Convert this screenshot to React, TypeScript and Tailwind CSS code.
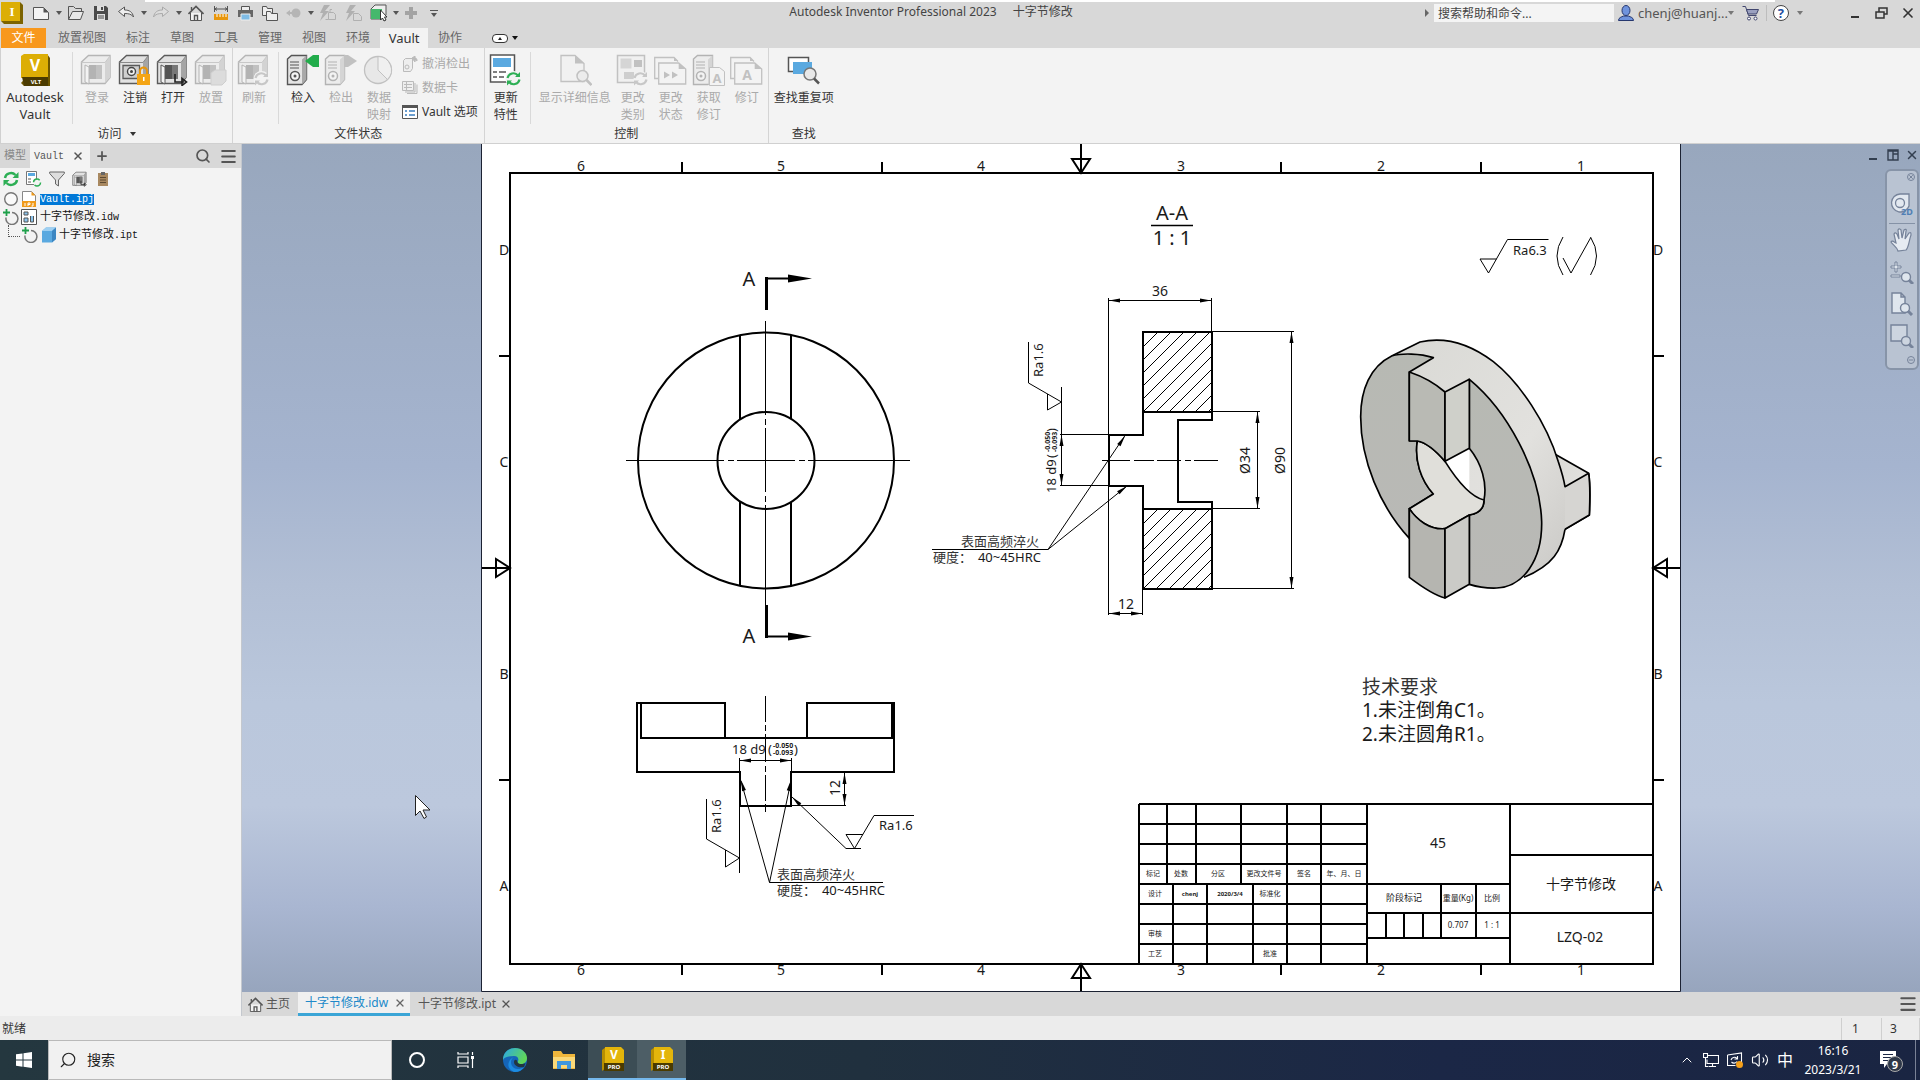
import type { ReactNode } from 'react'
import { ChevronUp, Menu, Minus, Plus, Search, Volume2, X } from 'lucide-react'
import clsx from 'clsx'

const UI_FONT = "font-['Noto_Sans','Noto_Sans_CJK_SC',sans-serif]"
const MONO_FONT = "font-['Liberation_Mono','Noto_Sans_CJK_SC',monospace]"

type IconProps = { className?: string }

function Caret({ className = 'border-t-[#555]' }: IconProps) {
  return (
    <span
      className={clsx(
        'block h-0 w-0 border-x-[3px] border-t-4 border-x-transparent',
        className
      )}
    />
  )
}

/* ---------- quick access icons ---------- */

const quickIcons: { label: string; width: string; icon: ReactNode }[] = [
  {
    label: '新建',
    width: 'w-[18px]',
    icon: (
      <svg viewBox="0 0 18 18" className="h-[18px] w-[18px]">
        <path d="M1.500 3.500h10l5 5v7h-15z" fill="#f4f4f4" stroke="#555" />
        <path d="M11.500 3.500v5h5z" fill="#555" />
      </svg>
    )
  },
  {
    label: '打开',
    width: 'w-[18px]',
    icon: (
      <svg viewBox="0 0 18 18" className="h-[18px] w-[18px]">
        <path d="M1.500 15.500v-13h5l2 2h6v3" fill="none" stroke="#555" />
        <path d="M1.500 15.500l4-8h11l-3 8z" fill="#e8e8e8" stroke="#555" />
      </svg>
    )
  },
  {
    label: '保存',
    width: 'w-4',
    icon: (
      <svg viewBox="0 0 16 16" className="h-4 w-4">
        <path d="M1 1h12l2 2v12H1z" fill="#4a4a4a" />
        <path d="M4 1h7v5H4zM4 9h8v6H4z" fill="#e0e0e0" />
        <path d="M8 2h2v3H8zM5 10.500h6v1H5zM5 12.500h6v1H5z" fill="#4a4a4a" />
      </svg>
    )
  },
  {
    label: '撤消',
    width: 'w-[18px]',
    icon: (
      <svg viewBox="0 0 18 18" className="h-[18px] w-[18px]">
        <path
          d="M1.500 7.500l6-4.500v3c5 0 8 2 9 7-2-3-5-3.500-9-3.500v3z"
          fill="#eee"
          stroke="#555"
        />
      </svg>
    )
  },
  {
    label: '重做',
    width: 'w-[18px]',
    icon: (
      <svg viewBox="0 0 18 18" className="h-[18px] w-[18px]">
        <path
          d="M16.500 7.500l-6-4.500v3c-5 0-8 2-9 7 2-3 5-3.500 9-3.500v3z"
          fill="#ddd"
          stroke="#aaa"
        />
      </svg>
    )
  },
  { label: '主页', width: 'w-[18px]', icon: <HomeIcon /> },
  {
    label: '测量',
    width: 'w-4',
    icon: (
      <svg viewBox="0 0 16 16" className="h-4 w-4">
        <path d="M1.500 1v6M14.500 1v6M2 4h12M4 2.500L2 4l2 1.500M12 2.500L14 4l-2 1.500" fill="none" stroke="#555" />
        <path d="M1 9h14v6H1z" fill="#e8960c" />
        <path d="M4 9v3M7 9v3M10 9v3M13 9v3" stroke="#fff" />
      </svg>
    )
  },
  {
    label: '打印',
    width: 'w-[17px]',
    icon: (
      <svg viewBox="0 0 17 17" className="h-[17px] w-[17px]">
        <path d="M4.500 1.500h8v4h-8z" fill="#eee" stroke="#555" />
        <path d="M1 5h15v7H1z" fill="#666" />
        <path d="M4 9h9v6H4z" fill="#7fbce6" stroke="#eee" />
      </svg>
    )
  },
  {
    label: '项目',
    width: 'w-4',
    icon: (
      <svg viewBox="0 0 16 16" className="h-4 w-4" fill="#eee" stroke="#555">
        <path d="M.5 1.500h4l1 2h5v7h-10z" />
        <path d="M4.500 6.500h4l1 2h6v7h-11z" />
      </svg>
    )
  },
  {
    label: '选择',
    width: 'w-4',
    icon: (
      <svg viewBox="0 0 16 16" className="h-4 w-4" fill="#b5b5b5">
        <circle cx="10" cy="8" r="4.500" />
        <path d="M0 8l4-3v2h3v2H4v2z" />
      </svg>
    )
  },
  {
    label: '更新',
    width: 'w-[18px]',
    icon: (
      <svg viewBox="0 0 18 18" className="h-[18px] w-[18px]" fill="none" stroke="#b0b0b0">
        <path d="M5 1h6L6 7h4L1 17l3-8H1z" fill="#b0b0b0" stroke="none" />
        <path d="M9.500 8.500h5l2 2v5h-7zM13 5.500h-2v3M6.500 15.500h3" />
      </svg>
    )
  },
  {
    label: '全部更新',
    width: 'w-[18px]',
    icon: (
      <svg viewBox="0 0 18 18" className="h-[18px] w-[18px]" fill="none" stroke="#b0b0b0">
        <path d="M5 1h6L6 7h4L1 17l3-8H1z" fill="#b0b0b0" stroke="none" />
        <path d="M8.500 9.500h5l3 3v4h-8z" />
      </svg>
    )
  },
  {
    label: '外观',
    width: 'w-4',
    icon: (
      <svg viewBox="0 0 18 18" className="h-[18px] w-[18px] shrink-0">
        <path d="M1 5l4-4h11v10l-4 4H1z" fill="#eee" stroke="#555" />
        <path d="M1 5h11v10H1z" fill="#45b86c" />
        <path d="M10.500 6v10l2-2 1.500 3 2-1-1.500-3H17z" fill="#fff" stroke="#333" />
      </svg>
    )
  },
  {
    label: '添加',
    width: 'w-3.5',
    icon: (
      <svg viewBox="0 0 12 12" className="h-3 w-3">
        <path d="M4 0h4v4h4v4H8v4H4V8H0V4h4z" fill="#a3a3a3" />
      </svg>
    )
  }
]

const carets = [0, 3, 4, 9, 12]

function HomeIcon({ className = 'h-4 w-4' }: IconProps) {
  return (
    <svg viewBox="0 0 16 16" className={className}>
      <path d="M2.500 8v7.500h11V8" fill="#f2f2f2" stroke="#555" />
      <path d="M.5 9L8 1.500 15.500 9" fill="none" stroke="#555" strokeWidth="1.600" />
      <path d="M6.500 15.500v-5h3v5M3.500 2v3" fill="none" stroke="#555" strokeWidth="1.400" />
    </svg>
  )
}

function InventorTile() {
  return (
    <svg viewBox="0 0 24 22" className="h-[22px] w-6">
      <path d="M20 0l3 3v19H4l-3-3z" fill="#7c6300" />
      <path d="M1 0h19v19H1z" fill="#dcae05" />
      <text x="12" y="14" textAnchor="middle" fontSize="13" fontWeight="700" fontFamily="Liberation Serif" fill="#fff">
        I
      </text>
    </svg>
  )
}

function TitleBar() {
  return (
    <header className="flex h-[26px] items-center bg-[#d8d8d8]">
      <div className="-mt-1 flex items-center">
        <InventorTile />
        <div className="ml-2 flex items-center">
          {quickIcons.map((item, i) => (
            <div key={item.label} className="flex items-center">
              <button type="button" aria-label={item.label} className={clsx('flex justify-center', item.width)}>
                {item.icon}
              </button>
              {carets.includes(i) ? (
                <span className="flex w-[17px] justify-center">
                  <Caret />
                </span>
              ) : (
                <span className="w-2" />
              )}
            </div>
          ))}
          <button type="button" aria-label="自定义" className="flex flex-col items-center gap-0.5 pl-1">
            <span className="h-px w-2 bg-[#555]" />
            <Caret />
          </button>
        </div>
      </div>
      <h1 className="-mt-1.5 flex flex-1 justify-center gap-4 text-xs text-[#444]">
        <span>Autodesk Inventor Professional 2023</span>
        <span>十字节修改</span>
      </h1>
      <div className="-mt-1 flex w-[496px] items-center">
        <span className="mr-1 ml-px h-0 w-0 border-y-4 border-l-4 border-y-transparent border-l-[#666]" />
        <input
          aria-label="搜索帮助和命令"
          placeholder="搜索帮助和命令..."
          className="ml-px h-[18px] w-[180px] bg-[#f4f4f4] px-1 text-xs outline-none placeholder:text-[#444]"
        />
        <svg viewBox="0 0 16 16" className="ml-1 h-4 w-4" fill="#6f93dd" stroke="#26376e">
          <path d="M.5 15.500c0-3 3-3.500 5-4.500h5c2 1 5 1.500 5 4.500z" />
          <ellipse cx="8" cy="5.500" rx="4" ry="5" />
        </svg>
        <button type="button" className="ml-1 flex items-center text-[13px] leading-4 whitespace-nowrap text-[#555]">
          chenj@huanj...
          <Caret className="border-t-[#777]" />
        </button>
        <svg viewBox="0 0 18 16" className="ml-2 h-4 w-[18px]" fill="#9aa0c0" stroke="#41466e">
          <path d="M.5 1.500h3l3 9h8" fill="none" />
          <path d="M4.500 4.500h12l-2 4.500H6z" />
          <circle cx="7" cy="13.500" r="1.500" fill="#fff" />
          <circle cx="13.500" cy="13.500" r="1.500" fill="#fff" />
        </svg>
        <span className="mx-1.5 h-4 w-px bg-[#bdbdbd]" />
        <button
          type="button"
          aria-label="帮助"
          className="flex h-4 w-4 items-center justify-center rounded-full border border-[#444] bg-white text-[13px] leading-none font-bold text-[#1f4fa0]"
        >
          ?
        </button>
        <Caret className="ml-2 border-t-[#777]" />
        <div className="ml-auto flex items-center gap-3 pr-1 text-[#333]">
          <button type="button" aria-label="最小化" className="mt-2 mr-1">
            <span className="block h-0.5 w-2 bg-[#333]" />
          </button>
          <button type="button" aria-label="还原">
            <svg viewBox="0 0 13 12" className="h-3 w-[13px]" fill="none" stroke="#333" strokeWidth="1.500">
              <path d="M1 5h8v6H1zM4 5V1h8v6H9" />
            </svg>
          </button>
          <button type="button" aria-label="关闭">
            <X className="h-4 w-4" strokeWidth={2.500} />
          </button>
        </div>
      </div>
    </header>
  )
}

/* ---------- ribbon ---------- */

const ribbonTabs = ['放置视图', '标注', '草图', '工具', '管理', '视图', '环境', 'Vault', '协作']

function RibbonTabs() {
  return (
    <nav className="flex h-5 items-stretch bg-[#d8d8d8] pl-px text-xs leading-5 text-[#666]">
      <button type="button" className="w-[45px] bg-[#f8981d] text-white">
        文件
      </button>
      <div role="tablist" className="ml-0.5 flex">
        {ribbonTabs.map(tab => (
          <button
            key={tab}
            type="button"
            role="tab"
            aria-selected={tab === 'Vault'}
            className={clsx(
              tab === 'Vault' ? 'w-12 bg-[#f3f3f3] text-[13px] text-[#333]' : 'px-2.5'
            )}
          >
            {tab}
          </button>
        ))}
      </div>
      <button type="button" aria-label="最小化功能区" className="ml-5 flex items-center gap-1">
        <span className="flex h-[9px] w-4 items-center justify-center rounded-sm border border-[#333] bg-white">
          <span className="h-0 w-0 border-x-2 border-b-[3px] border-x-transparent border-b-[#222]" />
        </span>
        <Caret className="border-t-[#111]" />
      </button>
    </nav>
  )
}

function Safe({ children, closed = false }: { children?: ReactNode; closed?: boolean }) {
  return (
    <>
      <path d="M1.500 8l7-6.500h21.500v22l-5 6H1.500z" fill="#e2e2e2" stroke="#5b5b5b" strokeWidth="1.400" />
      <path d="M25 8.500V29l5-5.500V2z" fill="#a5a5a5" />
      <path d="M1.500 8.500h23.500l5-6.500" fill="none" stroke="#8a8a8a" />
      {closed ? (
        <>
          <path d="M5 11.500h16.500v13H5z" fill="#cfcfcf" stroke="#5b5b5b" strokeWidth="1.300" />
          <circle cx="13.500" cy="17.500" r="4" fill="#eee" stroke="#444" strokeWidth="1.400" />
          <circle cx="13.500" cy="17.500" r="1.500" fill="#444" />
        </>
      ) : (
        <>
          <path d="M9 11h13v14H9z" fill="#555" />
          <path d="M16 11h6v14h-6z" fill="#777" />
          <path d="M5 11l4 2v17l-4-2z" fill="#f4f4f4" stroke="#5b5b5b" />
        </>
      )}
      {children}
    </>
  )
}

function Cabinet({ children }: { children?: ReactNode }) {
  return (
    <>
      <path d="M1.500 5l4-3.500h15v24L16 30.500H1.500z" fill="#e4e4e4" stroke="#555" strokeWidth="1.400" />
      <path d="M16 5.500v25l4.500-5v-24z" fill="#a9a9a9" />
      <path d="M4 8h9M4 11h9M4 14h9" stroke="#555" strokeWidth="1.200" />
      <circle cx="9" cy="22" r="4.500" fill="#f4f4f4" stroke="#555" strokeWidth="1.500" />
      <circle cx="9" cy="22" r="1.500" fill="#555" />
      {children}
    </>
  )
}

function Cycle({ color }: { color: string }) {
  return (
    <g fill="none" stroke={color} strokeWidth="2.200">
      <path d="M18.500 24a6 6 0 0 1 10.500-2.500M30.500 25.500a6 6 0 0 1-10.500 2.500" />
      <path d="M31 18v5h-5zM18 31.500v-5h5z" fill={color} stroke="none" />
    </g>
  )
}

function Sheets({ children }: { children: ReactNode }) {
  return (
    <>
      <path d="M4 24.500H.7v-21H20l4 4" fill="none" stroke="#777" strokeWidth="1.300" />
      <path d="M4.700 9h20l7 6v15h-27z" fill="#f3f3f3" stroke="#777" strokeWidth="1.300" />
      <path d="M24.700 9v6h7zM20 3.500V7h4z" fill="#777" />
      {children}
    </>
  )
}

const ribbonIcons: Record<string, ReactNode> = {
  login: <Safe />,
  logout: (
    <Safe closed>
      <path d="M22 20v-3a3.500 3.500 0 0 1 7 0v3" fill="none" stroke="#e8960c" strokeWidth="2" />
      <path d="M19 20h13v11H19z" fill="#f4a515" />
      <path d="M25 23h1.500v4H25z" fill="#fff" />
    </Safe>
  ),
  open: (
    <Safe>
      <path d="M19 20v8h9M26 24.500l4.500 3.500-4.500 3.500z" fill="none" stroke="#222" strokeWidth="1.600" />
    </Safe>
  ),
  place: (
    <Safe>
      <path d="M17 19l4-3h11v11l-4 4H17z" fill="#bbb" stroke="#999" />
    </Safe>
  ),
  refresh: (
    <Safe>
      <circle cx="24.500" cy="25" r="8" fill="#f3f3f3" />
      <Cycle color="#888" />
    </Safe>
  ),
  checkin: (
    <Cabinet>
      <path d="M19 7l8-6h6v12h-6z" fill="#22ac4b" />
    </Cabinet>
  ),
  checkout: (
    <Cabinet>
      <path d="M33 7l-9-6h-4v12h4z" fill="#777" />
    </Cabinet>
  ),
  mapping: (
    <>
      <circle cx="16" cy="16" r="13.500" fill="#d8d8d8" stroke="#777" strokeWidth="1.300" />
      <path d="M16 2.500V16l9.500 9.500A13.500 13.500 0 0 0 16 2.500z" fill="#ececec" stroke="#777" />
    </>
  ),
  props: (
    <>
      <path d="M1.500 1h24v27h-24z" fill="#fff" stroke="#555" strokeWidth="1.500" />
      <path d="M4 4h18v9H4z" fill="#5aa9e0" />
      <path d="M4 18h4M4 23h4M10 18h7M10 23h5" stroke="#555" strokeWidth="1.600" />
      <circle cx="24.500" cy="25" r="8" fill="#f3f3f3" />
      <Cycle color="#2daf55" />
    </>
  ),
  details: (
    <>
      <path d="M3 1.500h14l9 8v18H3z" fill="#f0f0f0" stroke="#777" strokeWidth="1.300" />
      <path d="M17 1.500v8h9z" fill="#777" />
      <circle cx="24.500" cy="22" r="5.500" fill="#e4e4e4" stroke="#777" strokeWidth="1.500" />
      <path d="M28.500 26l5 5" stroke="#777" strokeWidth="2.500" />
    </>
  ),
  category: (
    <>
      <path d="M1.500 1.500h27v27h-27z" fill="#eee" stroke="#777" strokeWidth="1.500" />
      <path d="M4.500 4.500h11v10h-11z" fill="#aaa" />
      <path d="M18 6h8v7h-8z" fill="#777" />
      <path d="M8 18h10v7H8z" fill="#999" />
      <circle cx="25" cy="25" r="7.500" fill="#f3f3f3" />
      <Cycle color="#888" />
    </>
  ),
  state: (
    <Sheets>
      <path d="M10 17.500l6 3.500-6 3.500zM18 17.500l6 3.500-6 3.500z" fill="#777" />
    </Sheets>
  ),
  getrev: (
    <Cabinet>
      <path d="M17.500 13.500h10l5 4v14h-15z" fill="#f3f3f3" stroke="#777" />
      <text x="25" y="29" textAnchor="middle" fontSize="13" fontWeight="700" fill="#777">
        A
      </text>
    </Cabinet>
  ),
  revise: (
    <Sheets>
      <text x="17" y="26" textAnchor="middle" fontSize="14" fontWeight="700" fill="#777">
        A
      </text>
    </Sheets>
  ),
  find: (
    <>
      <path d="M1.500 3.500h20v14h-20z" fill="#fff" stroke="#555" strokeWidth="1.500" />
      <path d="M6 8h19v12H6z" fill="#5aa9e0" />
      <circle cx="23" cy="20" r="6" fill="#e8e8e8" stroke="#777" strokeWidth="1.500" />
      <path d="M27 24.500l5 5" stroke="#555" strokeWidth="2.500" />
    </>
  )
}

type ToolProps = { icon: string; lines: string[]; width?: string; disabled?: boolean }

function Tool({ icon, lines, width = 'w-[38px]', disabled = false }: ToolProps) {
  return (
    <button
      type="button"
      disabled={disabled}
      className={clsx('flex flex-col items-center pt-1.5', width, disabled ? 'text-[#aaa]' : 'text-[#333]')}
    >
      <svg viewBox="0 0 34 32" className={clsx('h-8 w-[34px]', disabled && 'opacity-40')}>
        {ribbonIcons[icon]}
      </svg>
      <span className="mt-[3px] flex flex-col text-xs leading-[17px] whitespace-nowrap">
        {lines.map(line => (
          <span key={line}>{line}</span>
        ))}
      </span>
    </button>
  )
}

function Divider() {
  return <span className="mx-[5px] mt-1 h-[72px] w-px bg-[#d9d9d9]" />
}

function RibbonGroup({ label, children, caret = false }: { label: string; children: ReactNode; caret?: boolean }) {
  return (
    <section className="flex flex-col border-r border-[#d4d4d4]">
      <div className="flex h-[77px] px-0.5">{children}</div>
      <h2 className="flex items-center justify-center gap-2 text-xs leading-[17px] text-[#333]">
        {label}
        {caret && <Caret className="border-t-[#333]" />}
      </h2>
    </section>
  )
}

function Ribbon() {
  return (
    <div className="flex h-24 border-b border-l border-[#d0d0d0] bg-[#f3f3f3]">
      <RibbonGroup label="访问" caret>
        <button type="button" className="flex w-16 flex-col items-center pt-1.5 text-[#333]">
          <svg viewBox="0 0 32 32" className="h-8 w-8">
            <path d="M28 0l3 4v28H5l-3-3z" fill="#6d5600" />
            <path d="M2 2l3-2h24v24H2z" fill="#dcae05" />
            <path d="M3 23h26v9H5z" fill="#4b3b00" />
            <text x="16" y="17" textAnchor="middle" fontSize="16" fontWeight="700" fill="#fff">
              V
            </text>
            <text x="17" y="30" textAnchor="middle" fontSize="6" fontWeight="700" fill="#fff">
              VLT
            </text>
          </svg>
          <span className="mt-[3px] text-[13px] leading-[17px]">
            Autodesk
            <br />
            Vault
          </span>
        </button>
        <Divider />
        <Tool icon="login" lines={['登录']} disabled />
        <Tool icon="logout" lines={['注销']} />
        <Tool icon="open" lines={['打开']} />
        <Tool icon="place" lines={['放置']} disabled />
      </RibbonGroup>
      <RibbonGroup label="文件状态">
        <Tool icon="refresh" lines={['刷新']} disabled />
        <Divider />
        <Tool icon="checkin" lines={['检入']} />
        <Tool icon="checkout" lines={['检出']} disabled />
        <Tool icon="mapping" lines={['数据', '映射']} disabled />
        <div className="flex flex-col gap-1 pt-1.5 pr-1 pl-1 text-xs text-[#aaa]">
          <button type="button" disabled className="flex h-5 items-center gap-1">
            <svg viewBox="0 0 16 16" className="h-4 w-4" fill="#eee" stroke="#bbb">
              <path d="M1.500 4.500l2-2h7v10l-2 3h-7z" />
              <circle cx="5" cy="11" r="2" />
              <path d="M10 2l3-2v2c2 0 2 2 2 3-1-1-2-1-2-1v2z" fill="#bbb" />
            </svg>
            撤消检出
          </button>
          <button type="button" disabled className="flex h-5 items-center gap-1">
            <svg viewBox="0 0 16 16" className="h-4 w-4" fill="#eee" stroke="#bbb">
              <path d="M5 13.500h10v-9M3 12h10V3M.5 1.500h11v9H.5zM2 4.500h8M2 7.500h8M4.500 2v8" />
            </svg>
            数据卡
          </button>
          <button type="button" className="flex h-5 items-center gap-1 whitespace-nowrap text-[#333]">
            <svg viewBox="0 0 16 16" className="h-4 w-4">
              <path d="M.5 1.500h15v13H.5z" fill="#fff" stroke="#555" />
              <path d="M0 1h16v3H0z" fill="#555" />
              <path d="M3 7h2M3 11h2M7 7h6M7 11h6" stroke="#3b7fc0" strokeWidth="1.500" />
            </svg>
            Vault 选项
          </button>
        </div>
      </RibbonGroup>
      <RibbonGroup label="控制">
        <Tool icon="props" lines={['更新', '特性']} />
        <Divider />
        <Tool icon="details" lines={['显示详细信息']} width="w-[78px]" disabled />
        <Tool icon="category" lines={['更改', '类别']} disabled />
        <Tool icon="state" lines={['更改', '状态']} disabled />
        <Tool icon="getrev" lines={['获取', '修订']} disabled />
        <Tool icon="revise" lines={['修订']} disabled />
      </RibbonGroup>
      <section className="flex flex-col">
        <div className="flex h-[77px] px-1">
          <Tool icon="find" lines={['查找重复项']} width="w-[62px]" />
        </div>
        <h2 className="text-center text-xs leading-[17px] text-[#333]">查找</h2>
      </section>
    </div>
  )
}

/* ---------- browser panel ---------- */

function GreenRefresh({ className = 'h-4 w-4' }: IconProps) {
  return (
    <svg viewBox="0 0 16 16" className={className}>
      <g fill="none" stroke="#2daf55" strokeWidth="2.400">
        <path d="M2 7a6 5.500 0 0 1 10.500-3M14 9a6 5.500 0 0 1-10.500 3" />
      </g>
      <path d="M15.500 1v6H9.500zM.5 15V9h6z" fill="#2daf55" />
    </svg>
  )
}

function StatusCircle({ added = false }: { added?: boolean }) {
  return (
    <svg viewBox="0 0 16 16" className="h-4 w-4">
      {added ? (
        <>
          <path d="M9 3.500a6 6 0 1 1-6 5" fill="none" stroke="#777" strokeWidth="1.500" />
          <path d="M3.500 0v7M0 3.500h7" stroke="#1fa04a" strokeWidth="1.800" />
        </>
      ) : (
        <circle cx="8" cy="8" r="6.300" fill="#fafafa" stroke="#777" strokeWidth="1.400" />
      )}
    </svg>
  )
}

function BrowserPanel() {
  return (
    <aside className={clsx('flex w-[242px] shrink-0 flex-col border-r border-[#c4c8ce] bg-[#f3f3f3]', MONO_FONT)}>
      <div className="flex h-6 items-stretch bg-[#d8d8d8] text-[#555]">
        <button type="button" className="w-[30px] text-[11px] text-[#888]">
          模型
        </button>
        <div className="flex w-[60px] items-center justify-between bg-[#f3f3f3] pr-1.5 pl-1 text-[10px]">
          <span>Vault</span>
          <button type="button" aria-label="关闭面板">
            <X className="h-3 w-3" strokeWidth={3} />
          </button>
        </div>
        <button type="button" aria-label="添加面板" className="px-[5px]">
          <Plus className="h-3.5 w-3.5" strokeWidth={3} />
        </button>
        <div className="ml-auto flex items-center gap-2 pr-[3px]">
          <button type="button" aria-label="搜索">
            <Search className="h-4 w-4" strokeWidth={2.500} />
          </button>
          <button type="button" aria-label="菜单">
            <Menu className="h-[19px] w-[19px]" strokeWidth={2.500} />
          </button>
        </div>
      </div>
      <div className="flex h-[22px] items-center gap-[7px] pl-[3px]">
        <button type="button" aria-label="刷新">
          <GreenRefresh />
        </button>
        <button type="button" aria-label="更新状态">
          <svg viewBox="0 0 16 16" className="h-4 w-4">
            <path d="M.5.5h10v13H.5z" fill="#fff" stroke="#777" />
            <path d="M2 2h7v3H2z" fill="#5aa9e0" />
            <path d="M2 8h3M2 11h3" stroke="#555" />
            <circle cx="11" cy="11.500" r="3.500" fill="#f3f3f3" stroke="#2daf55" strokeWidth="1.500" strokeDasharray="8 3" />
          </svg>
        </button>
        <button type="button" aria-label="过滤器">
          <svg viewBox="0 0 16 16" className="h-4 w-4">
            <path d="M.7 1h14.600v1.500L9.500 9v6l-3-2V9L.7 2.500z" fill="#ddd" stroke="#666" />
          </svg>
        </button>
        <button type="button" aria-label="打开">
          <svg viewBox="0 0 34 32" className="h-4 w-4">
            {ribbonIcons.open}
          </svg>
        </button>
        <button type="button" aria-label="粘贴">
          <svg viewBox="0 0 16 16" className="h-4 w-4">
            <path d="M3 2h10v13H3z" fill="#a88860" />
            <path d="M6 1h4v3H6z" fill="#666" />
            <path d="M5 6.500h6M5 9h6M5 11.500h6" stroke="#5d4a32" />
          </svg>
        </button>
      </div>
      <ul className="text-[11px] leading-[18px] text-[#111]">
        <li className="flex h-[18px] items-center gap-0.5 pl-[3px]">
          <StatusCircle />
          <svg viewBox="0 0 16 16" className="h-4 w-4">
            <path d="M1.500.5h9l4 4v11h-13z" fill="#fff" stroke="#888" />
            <path d="M10.500.5v4h4zM1 10h14v6H1z" fill="#f09a1a" />
            <path d="M4 12v3M7 15v-3h2v1.500H7M12 12v3h-1.500" fill="none" stroke="#fff" />
          </svg>
          <span className="ml-px bg-[#0078d7] text-[10px] leading-[11px] text-white">Vault.ipj</span>
        </li>
        <li className="flex h-[18px] items-center gap-0.5 pl-[3px]">
          <StatusCircle added />
          <svg viewBox="0 0 16 16" className="h-4 w-4" stroke="#555">
            <path d="M.5.5h15v15H.5z" fill="#fff" />
            <path d="M3 3h4v3H3zM3 9h4v4H3zM9.500 7v6h3V7" fill="#8cc4ec" />
          </svg>
          <span className="ml-px">
            十字节修改<span className="text-[10px]">.idw</span>
          </span>
        </li>
        <li className="flex h-[18px] items-center gap-0.5 pl-2">
          <span className="mb-2 h-3 w-3 border-b border-l border-dotted border-[#555]" />
          <StatusCircle added />
          <svg viewBox="0 0 16 16" className="ml-px h-4 w-4">
            <path d="M1 4l4-3.500h10V12l-4 3.500H1z" fill="#5aa9e0" />
            <path d="M1 4l4-3.500h10L11 4z" fill="#9fd0f2" />
            <path d="M11 4v11.500l4-3.500V.5z" fill="#3d87c2" />
          </svg>
          <span>
            十字节修改<span className="text-[10px]">.ipt</span>
          </span>
        </li>
      </ul>
    </aside>
  )
}

/* ---------- drawing sheet ---------- */

type LabelProps = {
  x: number
  y: number
  size?: number
  anchor?: 'start' | 'middle' | 'end'
  turn?: boolean
  serif?: boolean
  bold?: boolean
  children: ReactNode
}

function Label({ x, y, size = 13, anchor = 'start', turn, serif, bold, children }: LabelProps) {
  return (
    <text
      x={x}
      y={y}
      fontSize={size}
      textAnchor={anchor}
      fontWeight={bold ? 700 : 400}
      fill={serif ? '#333' : '#1a1a1a'}
      stroke="none"
      fontFamily={serif ? "'Liberation Serif', 'Noto Sans CJK SC', serif" : "'Noto Sans', 'Noto Sans CJK SC', sans-serif"}
      transform={turn ? `rotate(-90 ${x} ${y})` : undefined}
    >
      {children}
    </text>
  )
}

// filled arrow head with its tip at (x, y), pointing along the angle in degrees
function Head({ x, y, angle, length = 11, half = 2 }: { x: number; y: number; angle: number; length?: number; half?: number }) {
  return (
    <path
      d={`M0 0L${-length} ${-half}L${-length} ${half}z`}
      transform={`translate(${x} ${y}) rotate(${angle})`}
      fill="#000"
      stroke="none"
    />
  )
}

function Frame() {
  const columns = [
    ['6', 581],
    ['5', 781],
    ['4', 981],
    ['3', 1181],
    ['2', 1381],
    ['1', 1581]
  ] as const
  const rows = [
    ['D', 255],
    ['C', 467],
    ['B', 679],
    ['A', 891]
  ] as const
  return (
    <g>
      <path d="M510 173H1653V964H510z" strokeWidth="2" />
      <path
        d="M682 162v11M882 162v11M1281 162v11M1481 162v11M682 964v11M882 964v11M1281 964v11M1481 964v11M499 356h11M499 780h11M1653 356h11M1653 780h11"
        strokeWidth="2"
      />
      <path
        d="M1081 144v29M1072 159h18L1081 173zM1081 991v-27M1072 978h18L1081 964zM482 568h28M496 559v18L510 568zM1680 568h-27M1667 559v18L1653 568z"
        strokeWidth="2"
      />
      {columns.map(([name, x]) => (
        <g key={name}>
          <Label x={x} y={171} size={14} anchor="middle">{name}</Label>
          <Label x={x} y={975} size={14} anchor="middle">{name}</Label>
        </g>
      ))}
      {rows.map(([name, y]) => (
        <g key={name}>
          <Label x={504} y={y} size={14} anchor="middle">{name}</Label>
          <Label x={1658} y={y} size={14} anchor="middle">{name}</Label>
        </g>
      ))}
    </g>
  )
}

function FrontView() {
  return (
    <g>
      <g strokeWidth="2">
        <circle cx="766" cy="460.500" r="128" />
        <circle cx="766" cy="460.500" r="48.500" />
        <path d="M740 335v84M791 335v84M740 502v84M791 502v84" />
        <path d="M766 278.500h30M766 636.500h30" />
      </g>
      <path d="M766.500 277v33M766.500 605v33" strokeWidth="3" />
      <path d="M626 460.500h98m4 0h6m3 0h58m4 0h6m3 0h102" />
      <path d="M765.500 321v94m0 4v6m0 3v64m0 4v6m0 3v100" />
      <Head x={812} y={278.5} angle={0} length={24} half={4} />
      <Head x={812} y={636.5} angle={0} length={24} half={4} />
      <Label x={749} y={286} size={20} anchor="middle">A</Label>
      <Label x={749} y={643} size={20} anchor="middle">A</Label>
    </g>
  )
}

function SectionView() {
  const hatch = Array.from({ length: 30 }, (_, i) => 1000 + i * 13)
  return (
    <g>
      <Label x={1172} y={220} size={20} anchor="middle">A-A</Label>
      <path d="M1151 225.500h42" strokeWidth="1.500" />
      <Label x={1172} y={245} size={20} anchor="middle">1 : 1</Label>

      <clipPath id="cut">
        <path d="M1143 332h69v80h-69zM1143 509h69v80h-69z" />
      </clipPath>
      <g clipPath="url(#cut)">
        {hatch.map(x => (
          <path key={x} d={`M${x} 412l80-80M${x} 589l80-80`} />
        ))}
      </g>
      <path
        d="M1143 332h69v88h-34v82h34v87h-69V486h-34v-51h34zM1143 412h69M1143 509h69"
        strokeWidth="2"
      />
      <path d="M1102 460.500h28m4 0h20m3 0h24m4 0h6m3 0h24" />

      <path d="M1108.500 298v317M1211.500 298v34M1108.500 300.500h103" />
      <Head x={1109} y={300.5} angle={180} />
      <Head x={1211} y={300.5} angle={0} />
      <Label x={1160} y={296} size={14} anchor="middle">36</Label>

      <path d="M1142.500 589v26M1108.500 613.500h34" />
      <Head x={1109} y={613.5} angle={180} />
      <Head x={1142} y={613.5} angle={0} />
      <Label x={1126} y={609} size={14} anchor="middle">12</Label>

      <path d="M1212 411.500h48M1212 508.500h48M1257.500 411v97" />
      <Head x={1257.5} y={412} angle={-90} />
      <Head x={1257.5} y={508} angle={90} />
      <Label x={1250} y={474} size={14} turn>Ø34</Label>

      <path d="M1212 331.500h82M1212 588.500h82M1291.500 332v257" />
      <Head x={1291.5} y={332} angle={-90} />
      <Head x={1291.5} y={588} angle={90} />
      <Label x={1285} y={474} size={14} turn>Ø90</Label>

      <path d="M1061.500 387v98M1060 434.500h49M1060 485.500h49" />
      <Head x={1061.5} y={435} angle={-90} />
      <Head x={1061.5} y={485} angle={90} />
      <Label x={1056} y={493} turn>18 d9</Label>
      <Label x={1056} y={458} turn>(</Label>
      <Label x={1050} y={452} size={7} turn bold>-0.050</Label>
      <Label x={1057} y={452} size={7} turn bold>-0.093</Label>
      <Label x={1056} y={432} turn>)</Label>

      <path d="M1028.500 342v41l33 19M1047.500 394v16l14-8" />
      <Label x={1043} y={377} turn>Ra1.6</Label>

      <path d="M932 549.500h116l77-114M1048 549.500l79-63.500" />
      <Head x={1125} y={436} angle={-56} />
      <Head x={1127} y={486} angle={-38} />
      <Label x={1039} y={546} anchor="end" serif>表面高频淬火</Label>
      <Label x={933} y={562} serif>硬度：</Label>
      <Label x={1041} y={562} anchor="end">40~45HRC</Label>
    </g>
  )
}

function BottomView() {
  return (
    <g>
      <g strokeWidth="2">
        <path d="M637 703h88v35h82v-35h87v69H637zM641 703v35h251v-35" />
        <path d="M740 772v34h51v-34" />
        <path d="M741 772h49" stroke="#fff" />
      </g>
      <path d="M765.500 696v26m0 3v6m0 3v28m0 4v6m0 3v26m0 3v8" />
      <Label x={732} y={754}>18 d9</Label>
      <Label x={768} y={754}>(</Label>
      <Label x={773} y={748} size={7} bold>-0.050</Label>
      <Label x={773} y={755} size={7} bold>-0.093</Label>
      <Label x={794} y={754}>)</Label>
      <path d="M739.500 758v115M791.500 758v14M740 760.500h51" />
      <Head x={740} y={760.5} angle={180} />
      <Head x={791} y={760.5} angle={0} />

      <path d="M791 805.500h55M844.500 772v34" />
      <Head x={844.5} y={773} angle={-90} />
      <Head x={844.5} y={805} angle={90} />
      <Label x={840} y={796} size={14} turn>12</Label>

      <path d="M706.500 799v40l33 19M725.500 850v17l14-9" />
      <Label x={721} y={833} turn>Ra1.6</Label>

      <path d="M883 882.500H769.500L741 781M769.500 882.500L791 781" />
      <Head x={741} y={780} angle={-106} />
      <Head x={791} y={780} angle={-78} />
      <Label x={777} y={879} serif>表面高频淬火</Label>
      <Label x={777} y={895} serif>硬度：</Label>
      <Label x={885} y={895} anchor="end">40~45HRC</Label>

      <path d="M792 797l54 51.500h15M846 834.500h17M846 834.500l8.500 14 19.500-33h40" />
      <Head x={792} y={797} angle={-136} />
      <Label x={879} y={830}>Ra1.6</Label>
    </g>
  )
}

function ShadedPart() {
  return (
    <svg x="1320" y="320" width="300" height="300" viewBox="0 0 900 900" strokeWidth="5" strokeLinejoin="round">
      <defs>
        <linearGradient id="rim" x1="0" y1="0" x2="1" y2="1">
          <stop offset="0" stopColor="#d9d9d5" />
          <stop offset=".6" stopColor="#e2e1de" />
          <stop offset="1" stopColor="#c9c8c5" />
        </linearGradient>
        <linearGradient id="face" x1="0" y1="0" x2="0" y2="1">
          <stop offset="0" stopColor="#b7b9b3" />
          <stop offset="1" stopColor="#b9b9b6" />
        </linearGradient>
      </defs>
      <path
        d="M708 404L806 460C812 500 810 540 808 585L735 628L690 560z"
        fill="url(#rim)"
      />
      <path
        d="M215 108L300 66C380 48 450 72 520 125C600 188 680 310 715 425C725 455 731 475 735 500L735 628C725 690 700 740 612 772L448 793V385L375 424V216L268 156L340 113z"
        fill="url(#rim)"
        stroke="none"
      />
      <path d="M735 500L806 460L808 585L735 628z" fill="#d6d5d2" stroke="none" />
      <path d="M215 108L300 66C380 48 450 72 520 125C600 188 680 310 715 425C725 455 731 475 735 500L806 460M735 628C725 690 700 735 612 772M806 460C812 500 810 540 808 585L735 628" />
      <path
        d="M215 108C245 99 300 100 340 113L268 156V362H292C283 420 302 480 340 522L268 566V655C180 560 122 420 122 290C122 210 150 140 215 108z"
        fill="url(#face)"
      />
      <path
        d="M448 178C560 270 660 450 665 605C667 720 610 800 530 804C500 805 470 800 448 793V585C478 580 492 565 492 540C502 490 485 430 448 385z"
        fill="url(#face)"
      />
      <path
        d="M292 363C320 368 350 395 375 424C410 480 450 530 492 540C492 565 478 580 448 585L375 626C330 630 290 600 268 566L340 522C302 480 283 420 292 363z"
        fill="#e0dfda"
      />
      <path d="M268 156C310 170 345 190 375 216V424C350 395 320 368 292 363H268z" fill="#b9bab4" />
      <path d="M375 216L448 178V385L375 424z" fill="#cfd0ca" />
      <path d="M268 566C290 600 330 630 375 626V834C340 825 305 800 268 772z" fill="#b5b5b0" />
      <path d="M375 626L448 585V793L375 834z" fill="#cbcbc7" />
    </svg>
  )
}

const titleCells: [string, number, number, number][] = [
  ['标记', 1153, 876, 7],
  ['处数', 1181, 876, 7],
  ['分区', 1218, 876, 7],
  ['更改文件号', 1264, 876, 7],
  ['签名', 1304, 876, 7],
  ['年、月、日', 1344, 876, 7],
  ['设计', 1155, 896, 7],
  ['chenj', 1190, 896, 6],
  ['2020/3/4', 1230, 896, 6],
  ['标准化', 1270, 896, 7],
  ['审核', 1155, 936, 7],
  ['工艺', 1155, 956, 7],
  ['批准', 1270, 956, 7],
  ['阶段标记', 1404, 901, 9],
  ['重量(Kg)', 1458, 901, 8],
  ['比例', 1492, 901, 8],
  ['0.707', 1458, 928, 8],
  ['1 : 1', 1492, 928, 8],
  ['45', 1438, 848, 14],
  ['十字节修改', 1581, 889, 14],
  ['LZQ-02', 1580, 942, 14]
]

function TitleBlock() {
  return (
    <g>
      <path
        strokeWidth="2"
        d="M1139 804h514M1139 804v160M1167 804v80M1196 804v80M1241 804v80M1287 804v160M1321 804v160M1367 804v160M1139 824h228M1139 844h228M1139 864h228M1139 884h371M1139 904h228M1139 924h228M1139 944h228M1173 884v80M1207 884v80M1253 884v80M1510 804v160M1441 884v54M1476 884v54M1367 913h286M1386 913v25M1404 913v25M1423 913v25M1367 938h143M1510 855h143"
      />
      {titleCells.map(([value, x, y, size]) => (
        <Label key={value} x={x} y={y} size={size} anchor="middle" bold={size === 6}>
          {value}
        </Label>
      ))}
    </g>
  )
}

function Sheet() {
  return (
    <svg
      viewBox="481 144 1200 848"
      className="mx-auto block h-full"
      fill="none"
      stroke="#000"
      strokeWidth="1"
      role="img"
      aria-label="十字节修改 工程图"
    >
      <path d="M481.500 143.500h1199v848h-1199z" fill="#fff" stroke="#1c2233" />
      <Frame />
      <FrontView />
      <SectionView />
      <BottomView />
      <ShadedPart />
      <path d="M1480 259h16.500M1480 259l8.500 14 19-33.500h41" />
      <Label x={1513} y={255}>Ra6.3</Label>
      <path d="M1563 237q-12 19 0 38M1563 258l8 15 19.500-35M1590.500 237q12 19 0 38" />
      <Label x={1362} y={694} size={19} serif>技术要求</Label>
      <Label x={1362} y={717} size={19}>1.未注倒角C1。</Label>
      <Label x={1362} y={741} size={19}>2.未注圆角R1。</Label>
      <TitleBlock />
    </svg>
  )
}

function NavBar() {
  const icon = 'h-6 w-6'
  return (
    <div className="absolute top-[25px] right-px flex h-[201px] w-[34px] flex-col items-center rounded-md border-2 border-[#8794a8] bg-[#b9c3d2] text-[#76839a]">
      <button type="button" aria-label="关闭导航栏" className="mt-0.5 mr-0.5 flex h-2 w-2 items-center justify-center self-end rounded-full border border-current">
        <X className="h-1.5 w-1.5" strokeWidth={4} />
      </button>
      <button type="button" aria-label="二维控制盘" className="mt-3">
        <svg viewBox="0 0 24 26" className="h-[26px] w-6" fill="#e2e8f0" stroke="currentColor" strokeWidth="1.300">
          <path d="M10 1h9v12a9 9 0 1 1-9-12z" />
          <circle cx="10" cy="10" r="4.500" />
          <text x="11" y="22" fontSize="9" fontWeight="700" fill="#4f7fb5" stroke="none">
            2D
          </text>
        </svg>
      </button>
      <span className="my-1 h-px w-[26px] bg-[#8592a6]" />
      <button type="button" aria-label="平移">
        <svg viewBox="0 0 24 24" className={icon} fill="#e6ebf2" stroke="currentColor" strokeWidth="1.200">
          <path d="M8 23c-1-4-5-6-7-9 1-2 3 0 5 1L4 6c1-2 2-1 3 0l2 5-1-9c1-2 2-1 3 0l1 8 2-8c1-1 3-1 2 1l-1 8 4-6c2-1 2 0 2 2-2 5-2 12-5 15z" />
        </svg>
      </button>
      <button type="button" aria-label="缩放" className="mt-2">
        <svg viewBox="0 0 24 24" className={icon} fill="#dfe6ee" stroke="currentColor" strokeWidth="1.400">
          <path d="M5 2h2v4h4v2H7v4H5V8H1V6h4zM1 15h9v2H1z" strokeWidth="1" />
          <circle cx="16" cy="17" r="4.500" />
          <path d="M19 20l4 4" strokeWidth="3" />
        </svg>
      </button>
      <button type="button" aria-label="全部缩放" className="mt-2">
        <svg viewBox="0 0 24 24" className={icon} fill="#dfe6ee" stroke="currentColor" strokeWidth="1.400">
          <path d="M2 1h9l4 4v16H2zM11 1v4h4" />
          <circle cx="15" cy="16" r="4.500" />
          <path d="M18 19l4 4" strokeWidth="3" />
        </svg>
      </button>
      <button type="button" aria-label="窗口缩放" className="mt-2">
        <svg viewBox="0 0 24 24" className={icon} fill="#cdd5e0" stroke="currentColor" strokeWidth="1.400">
          <path d="M1 1h16v16H1z" />
          <circle cx="16" cy="17" r="4.500" />
          <path d="M19 20l4 4" strokeWidth="3" />
        </svg>
      </button>
      <button type="button" aria-label="导航栏选项" className="mt-auto mr-0.5 mb-1 flex h-2 w-2 items-center justify-center self-end rounded-full border border-current">
        <Minus className="h-1.5 w-1.5" strokeWidth={4} />
      </button>
    </div>
  )
}

function Canvas() {
  return (
    <main className="relative min-h-0 flex-1 bg-[linear-gradient(to_bottom,#98a7bd_0%,#a5b4cf_38%,#b2bfd5_52%,#bac7dc_66%,#bcc8dd_78%,#a9b6d1_90%,#97a5bd_100%)]">
      <Sheet />
      <div className="absolute top-1 right-px flex items-center gap-2.5 text-[#333f50]">
        <button type="button" aria-label="最小化视图" className="mt-2">
          <span className="block h-0.5 w-2 bg-current" />
        </button>
        <button type="button" aria-label="平铺视图">
          <svg viewBox="0 0 12 12" className="h-3 w-3" fill="none" stroke="currentColor" strokeWidth="1.400">
            <path d="M1 1h10v10H1zM6 1v10M6 5h5M1 2h10" />
          </svg>
        </button>
        <button type="button" aria-label="关闭视图" className="-ml-1">
          <X className="h-3.5 w-3.5" strokeWidth={2.500} />
        </button>
      </div>
      <NavBar />
      <svg viewBox="0 0 16 24" className="absolute top-[651px] left-[173px] h-6 w-4">
        <path d="M.5.5v20l4.500-4.500 4 7.500 2.500-1.500-3.500-7h7z" fill="#fff" stroke="#222" />
      </svg>
    </main>
  )
}

function DocumentTabs() {
  return (
    <nav className="flex h-6 items-stretch bg-[#d8d8d8] text-xs text-[#555]">
      <button type="button" className="flex w-14 items-center gap-[3px] pl-1.5">
        <HomeIcon className="h-[15px] w-[15px]" />
        主页
      </button>
      <div className="flex w-28 items-center justify-between border-b-[3px] border-[#3ba5d6] bg-[#f0f0f0] pr-1 pl-[7px] whitespace-nowrap text-[#2089c9]">
        十字节修改.idw
        <button type="button" aria-label="关闭 idw" className="text-[#666]">
          <X className="h-3 w-3" strokeWidth={2.500} />
        </button>
      </div>
      <div className="flex w-28 items-center justify-between pr-2.5 pl-2 whitespace-nowrap">
        十字节修改.ipt
        <button type="button" aria-label="关闭 ipt">
          <X className="h-3 w-3" strokeWidth={2.500} />
        </button>
      </div>
      <button type="button" aria-label="文档列表" className="ml-auto pr-0.5">
        <Menu className="h-5 w-5" strokeWidth={2.500} />
      </button>
    </nav>
  )
}

function StatusBar() {
  return (
    <footer className="flex h-6 items-center bg-[#ececec] pt-0.5 pl-0.5 text-xs text-[#333]">
      <span>就绪</span>
      <span className="ml-auto h-[22px] w-10 border-l border-[#cfcfcf] pl-2.5 leading-[22px]">1</span>
      <span className="h-[22px] w-[39px] border-x border-[#cfcfcf] pl-2 leading-[22px]">3</span>
    </footer>
  )
}

/* ---------- taskbar ---------- */

function ProTile({ letter }: { letter: string }) {
  return (
    <svg viewBox="0 0 24 24" className="h-6 w-6">
      <path d="M1 3l4-3v21l-4 3z" fill="#b88f00" />
      <path d="M4 0h16l3 3v18H4z" fill="#e3b50b" />
      <path d="M3 16h20v8H3z" fill="#4b3b00" />
      <text x="13" y="12" textAnchor="middle" fontSize="12" fontWeight="700" fill="#fff">
        {letter}
      </text>
      <text x="13" y="22" textAnchor="middle" fontSize="6" fontWeight="700" fill="#fff">
        PRO
      </text>
    </svg>
  )
}

function Taskbar() {
  const item = 'flex w-[49px] items-center justify-center'
  return (
    <footer className="flex h-10 items-stretch bg-[linear-gradient(to_right,#24373f,#20303e_45%,#1b2746_75%,#1a2542)] text-white">
      <button type="button" aria-label="开始" className="flex w-12 items-center justify-center">
        <svg viewBox="0 0 16 16" className="h-4 w-4" fill="#fff">
          <path d="M0 2.300l6.500-.9v6.200H0zM7.500 1.200L16 0v7.600H7.500zM0 8.500h6.500v6.200L0 13.800zM7.500 8.500H16V16l-8.500-1.200z" />
        </svg>
      </button>
      <label className="flex w-[344px] items-center border border-[#b9b9b9] bg-[#f1f1f1] pl-2.5">
        <Search className="h-[18px] w-[18px] shrink-0 -scale-x-100 text-[#222]" strokeWidth={1.500} />
        <input
          aria-label="搜索"
          placeholder="搜索"
          className="ml-2.5 w-full bg-transparent text-sm outline-none placeholder:text-[#222]"
        />
      </label>
      <button type="button" aria-label="Cortana" className={item}>
        <span className="h-4 w-4 rounded-full border-2 border-white" />
      </button>
      <button type="button" aria-label="任务视图" className={item}>
        <svg viewBox="0 0 18 18" className="h-[18px] w-[18px]" fill="none" stroke="#fff" strokeWidth="1.200">
          <path d="M1 1v2h10V1M1 6h10v6H1zM1 17v-2h10v2M15.500 1v3M15.500 8v9" />
          <path d="M14 5h3v3h-3z" fill="#fff" stroke="none" />
        </svg>
      </button>
      <button type="button" aria-label="Microsoft Edge" className={item}>
        <svg viewBox="0 0 24 24" className="h-6 w-6">
          <defs>
            <linearGradient id="edge" x1="0" y1="0" x2="1" y2=".4">
              <stop offset="0" stopColor="#2aa7e8" />
              <stop offset="1" stopColor="#5fd65a" />
            </linearGradient>
          </defs>
          <circle cx="12" cy="12" r="12" fill="#1565b8" />
          <path d="M0 12C0 4 6 0 12 0c7 0 12 5 12 10 0 4-3 6-6 6-4 0-4-2-3-3 1-2 0-5-4-5-5 0-10 1-11 4z" fill="url(#edge)" />
          <path d="M11 9c-4 2-4 8 0 11 3 2 7 1 10-1-2 3-5 5-9 5-5-1-8-6-6-10 1-3 3-4 5-5z" fill="#1c8be0" />
          <path d="M14.500 14c0 2 5 3 8 1l-1.500 4c-5 1-10-1-10-5 0-3 3-3 3.500 0z" fill="#223640" />
        </svg>
      </button>
      <button type="button" aria-label="文件资源管理器" className={item}>
        <svg viewBox="0 0 22 20" className="h-5 w-[22px]">
          <path d="M0 1h8l2 3h12v15H0z" fill="#f0b73c" />
          <path d="M0 7h22v11H0z" fill="#fbd978" />
          <path d="M4 11h14v8h-4v-4H8v4H4z" fill="#3f97dd" />
        </svg>
      </button>
      <button type="button" aria-label="Vault Professional" className={clsx(item, 'border-b-2 border-[#76b9ed] bg-[#3c4d55]')}>
        <ProTile letter="V" />
      </button>
      <button type="button" aria-label="Inventor Professional" className={clsx(item, 'border-b-2 border-[#76b9ed] bg-[#4d5e66]')}>
        <ProTile letter="I" />
      </button>
      <div className="ml-auto flex items-center">
        <div className="flex items-center gap-2">
          <ChevronUp className="h-4 w-4" strokeWidth={1.500} />
          <svg viewBox="0 0 16 14" className="h-3.5 w-4" fill="none" stroke="#fff" strokeWidth="1.100">
            <path d="M5 2.500h10.500v8H4v-4M9.500 10.500v3M6 13.500h7M.5.500h4v4h-4zM2.500 5v8.500h3" />
          </svg>
          <svg viewBox="0 0 16 16" className="h-4 w-4" fill="none" stroke="#fff" strokeWidth="1.100">
            <path d="M.5 3l14-2v9M.5 3v10.500h8M4 8a3.500 3.500 0 0 1 6-1.500M10.500 4v3h-3M10 9.500a3.500 3.500 0 0 1-5.500.5" />
            <circle cx="12.500" cy="12.500" r="3.500" fill="#f5a01a" stroke="none" />
          </svg>
          <Volume2 className="h-[18px] w-[18px]" strokeWidth={1.500} />
          <span className="text-base leading-none">中</span>
        </div>
        <time className="w-20 text-center text-xs leading-[19px]">
          16:16
          <br />
          2023/3/21
        </time>
        <button type="button" aria-label="通知" className="relative ml-1.5 h-6 w-6">
          <svg viewBox="0 0 24 24" className="h-6 w-6">
            <path d="M1 3h16v13h-9l-3 4v-4H1z" fill="#fff" />
            <path d="M4 6.500h10M4 9.500h10M4 12.500h7" stroke="#1b2744" />
          </svg>
          <span className="absolute top-2 left-2 flex h-4 w-4 items-center justify-center rounded-full border border-[#aaa] bg-[#2d3748] text-[11px] leading-none font-bold">
            9
          </span>
        </button>
        <span className="ml-3 h-10 w-[5px] border-l border-[#7a8296]" />
      </div>
    </footer>
  )
}

export default function App() {
  return (
    <div className={clsx('flex h-screen flex-col overflow-hidden bg-[#d8d8d8]', UI_FONT)}>
      <div className="mx-[145px] h-0.5 shrink-0 bg-white" />
      <TitleBar />
      <RibbonTabs />
      <Ribbon />
      <div className="flex min-h-0 flex-1">
        <BrowserPanel />
        <div className="flex min-w-0 flex-1 flex-col">
          <Canvas />
          <DocumentTabs />
        </div>
      </div>
      <StatusBar />
      <Taskbar />
    </div>
  )
}
